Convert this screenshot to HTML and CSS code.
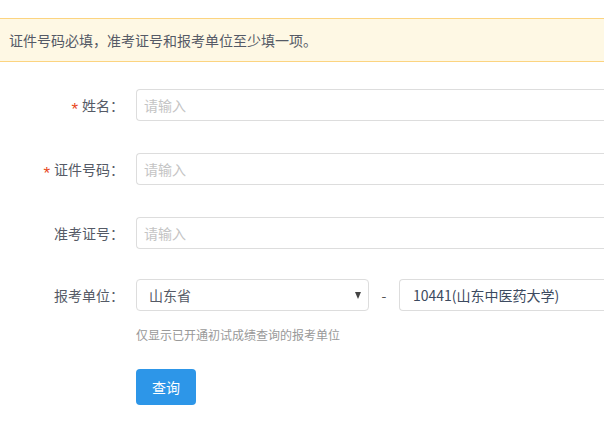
FILE: index.html
```html
<!DOCTYPE html>
<html lang="zh-CN">
<head>
<meta charset="utf-8">
<title>成绩查询</title>
<link rel="stylesheet" href="styles.css">
</head>
<body>
<div class="alert">证件号码必填，准考证号和报考单位至少填一项。</div>
<form class="form">
  <div class="row">
    <label class="label"><span class="req">*</span>姓名：</label>
    <div class="input"><span class="ph">请输入</span></div>
  </div>
  <div class="row">
    <label class="label"><span class="req">*</span>证件号码：</label>
    <div class="input"><span class="ph">请输入</span></div>
  </div>
  <div class="row">
    <label class="label">准考证号：</label>
    <div class="input"><span class="ph">请输入</span></div>
  </div>
  <div class="row unit-row">
    <label class="label">报考单位：</label>
    <div class="unit">
      <div class="selects">
        <div class="select prov"><span>山东省</span><span class="arrow"></span></div>
        <span class="dash">-</span>
        <div class="select school"><span>10441(山东中医药大学)</span></div>
      </div>
      <div class="hint">仅显示已开通初试成绩查询的报考单位</div>
      <div class="btn">查询</div>
    </div>
  </div>
</form>
</body>
</html>
```
FILE: styles.css
```css
html, body {
  margin: 0;
  padding: 0;
  background: #fff;
  overflow: hidden;
}
body {
  font-family: "Noto Sans CJK SC", "Noto Sans", sans-serif;
  font-size: 14px;
  color: #555;
  width: 604px;
  height: 421px;
}
.alert {
  margin-top: 18px;
  height: 42px;
  line-height: 42px;
  background: #fef8e4;
  border-top: 1px solid #fcd480;
  border-bottom: 1px solid #fcd480;
  padding-left: 9px;
  color: #555a66;
  white-space: nowrap;
}
.form {
  margin-top: 27px;
  display: flex;
  flex-direction: column;
  gap: 32px;
}
.row {
  display: flex;
  align-items: center;
  height: 32px;
}
.unit-row {
  align-items: flex-start;
  height: auto;
  margin-top: -2px;
}
.label {
  width: 124px;
  flex: none;
  text-align: right;
  margin-right: 12px;
  line-height: 32px;
  color: #555a66;
  white-space: nowrap;
}
.req {
  color: #e8491d;
  margin-right: 4px;
  font-size: 17px;
  vertical-align: -4px;
  line-height: 1;
  font-family: "Liberation Sans", sans-serif;
}
.input {
  flex: none;
  width: 461px;
  height: 30px;
  border: 1px solid #ddd;
  border-right: none;
  border-radius: 4px 0 0 4px;
  padding-left: 7px;
  line-height: 30px;
  box-sizing: content-box;
}
.ph {
  color: #c4c4c4;
}
.unit {
  display: flex;
  flex-direction: column;
}
.selects {
  display: flex;
  align-items: center;
  height: 32px;
}
.select {
  height: 30px;
  line-height: 30px;
  border: 1px solid #ddd;
  border-radius: 4px;
  color: #555a66;
  display: flex;
  align-items: center;
  justify-content: space-between;
  flex: none;
}
.prov {
  width: 219px;
  padding-left: 12px;
  padding-right: 0;
}
.arrow {
  width: 0;
  height: 0;
  border-left: 3.5px solid transparent;
  border-right: 3.5px solid transparent;
  border-top: 7px solid #444;
  margin-right: 7px;
}
.dash {
  width: 30px;
  text-align: center;
  color: #555;
  flex: none;
}
.school {
  width: 191px;
  padding-left: 13px;
  border-right: none;
  border-radius: 4px 0 0 4px;
  color: #3c4a60;
}
.hint {
  margin-top: 14px;
  font-size: 12px;
  line-height: 20px;
  color: #999;
}
.btn {
  margin-top: 24px;
  width: 60px;
  height: 36px;
  line-height: 36px;
  text-align: center;
  background: #2d96e8;
  color: #fff;
  border-radius: 4px;
}
```
